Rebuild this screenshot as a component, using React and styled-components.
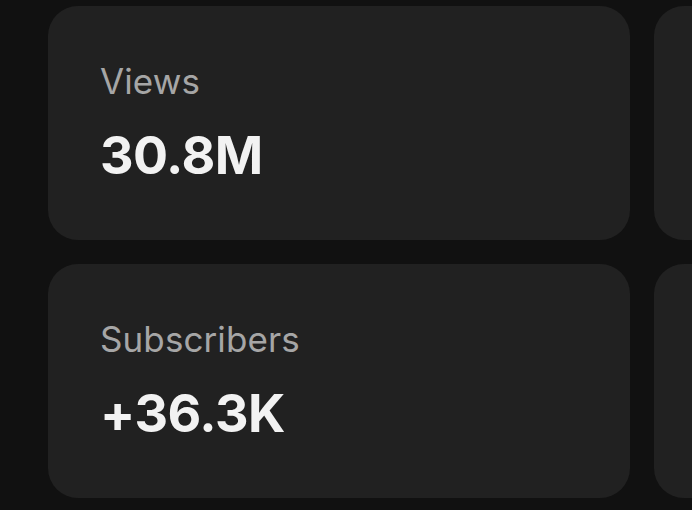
import React from "react";
import styled, { createGlobalStyle } from "styled-components";

const GlobalStyle = createGlobalStyle`
  html, body {
    margin: 0;
    padding: 0;
    background: #111111;
    overflow: hidden;
  }
  body {
    font-family: Inter, "Noto Sans", "Liberation Sans", sans-serif;
    -webkit-font-smoothing: antialiased;
  }
`;

const Page = styled.div`
  width: 692px;
  height: 510px;
  overflow: hidden;
  box-sizing: border-box;
  padding: 6px 0 0 48px;
`;

const Grid = styled.div`
  display: grid;
  grid-template-columns: 582px 582px;
  grid-auto-rows: 234px;
  gap: 24px;
  width: max-content;
`;

const Card = styled.div`
  background: #212121;
  border-radius: 30px;
  box-sizing: border-box;
  padding: 53px 52px 0 52px;
  display: flex;
  flex-direction: column;
`;

const Label = styled.div`
  color: #a6a6a6;
  font-size: 35px;
  line-height: 44px;
  font-weight: 400;
  letter-spacing: 0.1px;
`;

const Value = styled.div`
  color: #f2f2f2;
  font-size: 52px;
  line-height: 52px;
  font-weight: 700;
  margin-top: 27px;
  letter-spacing: -0.5px;
`;

const stats = [
  { label: "Views", value: "30.8M" },
  { label: null, value: null },
  { label: "Subscribers", value: "+36.3K" },
  { label: null, value: null },
];

export default function App() {
  return (
    <>
      <GlobalStyle />
      <Page>
        <Grid>
          {stats.map((s, i) => (
            <Card key={i}>
              {s.label && <Label>{s.label}</Label>}
              {s.value && <Value>{s.value}</Value>}
            </Card>
          ))}
        </Grid>
      </Page>
    </>
  );
}
